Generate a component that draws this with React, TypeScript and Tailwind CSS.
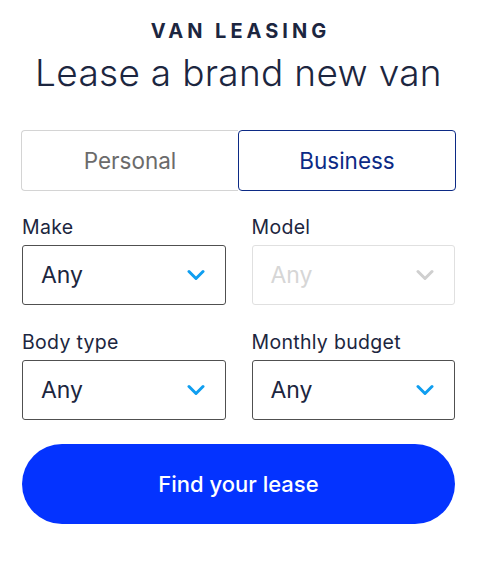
import { useState } from 'react'

const font = { fontFamily: '"Inter", "Noto Sans", sans-serif' }

function Chevron({ disabled }: { disabled?: boolean }) {
  return (
    <svg width="18" height="12" viewBox="0 0 18 12" fill="none" className="shrink-0">
      <path
        d="M2 2.5L9 9.5L16 2.5"
        stroke={disabled ? '#cfcfcf' : '#0f9ef0'}
        strokeWidth="3"
        strokeLinecap="round"
        strokeLinejoin="round"
      />
    </svg>
  )
}

function Select({ label, disabled }: { label: string; disabled?: boolean }) {
  return (
    <div className="flex flex-col">
      <span className="text-[19.5px] leading-[22px] text-[#1c2640] tracking-[0.3px]">{label}</span>
      <div
        className={
          'mt-[7px] h-[60px] flex items-center justify-between pl-[18px] pr-[20px] rounded-[3px] border ' +
          (disabled ? 'border-[#e0e0e0] text-[#d6d6d6]' : 'border-[#505050] text-[#1c2640]')
        }
      >
        <span className="text-[23px] leading-none">Any</span>
        <Chevron disabled={disabled} />
      </div>
    </div>
  )
}

export default function App() {
  const [mode, setMode] = useState<'personal' | 'business'>('business')

  return (
    <div className="w-[480px] h-[569px] bg-white pl-[22px] pr-[25px] pt-[19px]" style={font}>
      {/* ── Heading ── */}
      <p className="text-center text-[20px] leading-[24px] font-bold tracking-[4px] text-[#1c2640] pl-[4px]">
        VAN LEASING
      </p>
      <h1 className="text-center text-[37px] leading-[44px] font-light text-[#1c2640] mt-[8px] tracking-[0.3px]">
        Lease a brand new van
      </h1>

      {/* ── Personal / Business toggle ── */}
      <div className="mt-[35px] flex h-[61px] -mx-[1px]">
        <button
          onClick={() => setMode('personal')}
          className={
            'flex-1 text-[22.5px] rounded-l-[4px] border ' +
            (mode === 'personal'
              ? 'border-[#0c2a85] text-[#0c2a85] rounded-[4px]'
              : 'border-[#d4d4d4] border-r-0 text-[#6b6b6b]')
          }
        >
          Personal
        </button>
        <button
          onClick={() => setMode('business')}
          className={
            'flex-1 text-[22.5px] rounded-r-[4px] border ' +
            (mode === 'business'
              ? 'border-[#0c2a85] text-[#0c2a85] rounded-[4px] border-[1.5px]'
              : 'border-[#d4d4d4] border-l-0 text-[#6b6b6b]')
          }
        >
          Business
        </button>
      </div>

      {/* ── Filters ── */}
      <div className="mt-[25px] grid grid-cols-2 gap-x-[26px] gap-y-[26px]">
        <Select label="Make" />
        <Select label="Model" disabled />
        <Select label="Body type" />
        <Select label="Monthly budget" />
      </div>

      <button className="mt-[24px] w-full h-[80px] rounded-full bg-[#0433ff] text-white text-[22px] font-medium">
        Find your lease
      </button>
    </div>
  )
}
